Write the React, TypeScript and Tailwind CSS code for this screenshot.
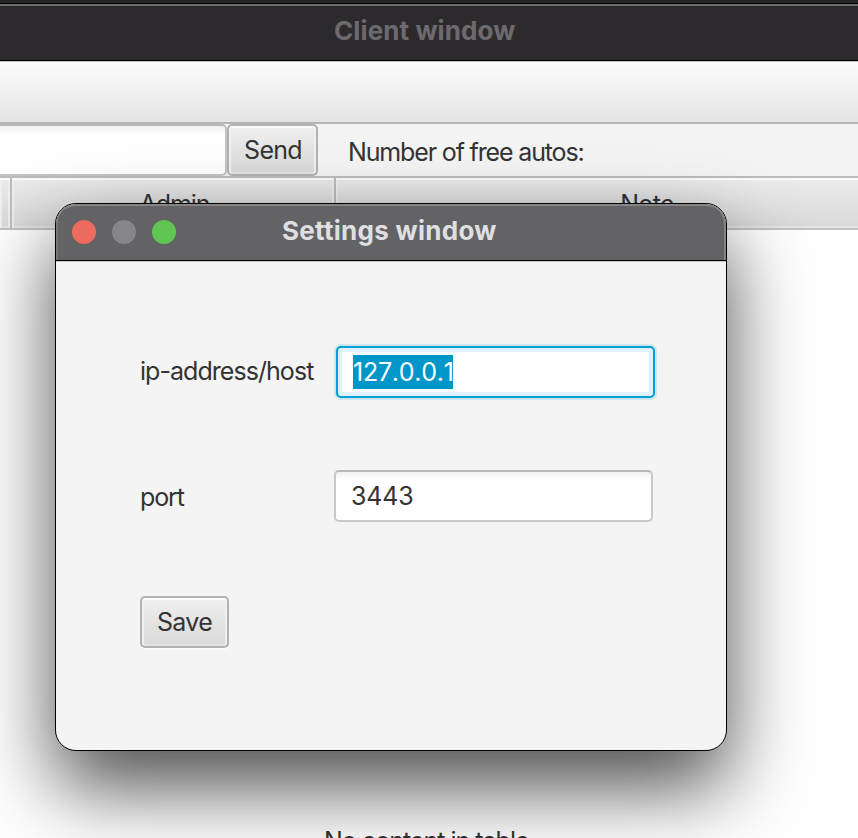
import type { ReactNode } from "react";

const font = "font-['Inter','Liberation_Sans',sans-serif]";

function Button({ children, className = "" }: { children: ReactNode; className?: string }) {
  return (
    <button
      className={`flex h-[52px] shrink-0 items-center justify-center rounded-[5px] border-2 border-[#b2b2b2] bg-linear-to-b from-[#efefef] to-[#d9d9d9] pt-[2px] text-[25px] shadow-[inset_0_2px_0_#fcfcfc,inset_2px_0_0_#f0f0f0,inset_-2px_0_0_#f0f0f0,inset_0_-2px_0_#e3e3e3,0_2px_0_#f9f9f9] ${className}`}
    >
      {children}
    </button>
  );
}

function HeaderCell({ children, className = "" }: { children?: ReactNode; className?: string }) {
  return (
    <div
      className={`flex h-[50px] shrink-0 items-center justify-center bg-linear-to-b from-[#ececec] to-[#d9d9d9] pt-[4px] text-[25px] shadow-[inset_0_2px_0_#fbfbfb,inset_2px_0_0_#f0f0f0,inset_-2px_0_0_#f0f0f0,inset_0_-2px_0_#e5e5e5] ${className}`}
    >
      {children}
    </div>
  );
}

function ClientWindow() {
  return (
    <div className="flex h-full flex-col bg-white">
      <div className="h-1 shrink-0 border-b border-black bg-[#232324]" />
      <div className="flex h-[57px] shrink-0 items-center border-t-2 border-b border-t-[#6a696b] border-b-black bg-[#2d2a2e] pb-[5px] pl-[334px] text-[26px] font-bold text-[#6d6a6e]">
        <span className="tracking-[0.1px]">Client window</span>
      </div>
      <div className="h-[63px] shrink-0 border-t border-b-2 border-t-[#c4c4c4] border-b-[#b5b5b5] bg-linear-to-b from-[#fcfcfc] to-[#e4e4e4]" />
      <div className="flex h-[52px] shrink-0 bg-[#f4f4f4]">
        <div className="h-[52px] w-[227px] shrink-0 rounded-r-[5px] border-2 border-l-0 border-[#c4c4c4] border-t-[#b8b8b8] bg-linear-to-b from-[#f0f0f0] to-white to-[8px]" />
        <Button className="w-[91px] pl-px tracking-[-0.7px]">Send</Button>
        <span className="pt-[9px] pl-[30px] text-[25px] leading-[38px] whitespace-nowrap tracking-[-1.15px]">
          Number of free autos:
        </span>
      </div>
      <div className="flex h-[54px] shrink-0 border-y-2 border-t-[#bdbdbd] border-b-[#c2c2c2]">
        <HeaderCell className="w-[10px]" />
        <HeaderCell className="w-[324px] border-l-2 border-[#bdbdbd] pl-[3px] tracking-[-1.1px]">Admin</HeaderCell>
        <HeaderCell className="w-[624px] border-l-2 border-[#bdbdbd] tracking-[-0.7px]">Note</HeaderCell>
      </div>
      <div className="flex flex-1 items-end overflow-hidden pl-[324px]">
        <div className="h-[12px] text-[25px] leading-[30px] whitespace-nowrap tracking-[-1px]">No content in table</div>
      </div>
    </div>
  );
}

function SettingsWindow() {
  return (
    <div className="absolute top-[203px] left-[55px] flex h-[548px] w-[672px] flex-col overflow-hidden rounded-[21px] border border-black bg-[#f4f4f4] shadow-[0_36px_80px_rgba(0,0,0,0.7)]">
      <div className="flex h-[57px] shrink-0 items-center rounded-t-[20px] border-b border-black bg-[#636365] pl-4 shadow-[inset_0_2px_0_#858587,inset_2px_0_0_#77777a,inset_-2px_0_0_#858587]">
        <div className="flex gap-4">
          <i className="size-6 rounded-full bg-[#ed6a5e]" />
          <i className="size-6 rounded-full bg-[#868688]" />
          <i className="size-6 rounded-full bg-[#61c554]" />
        </div>
        <span className="pb-[3px] pl-[106px] text-[26px] font-bold whitespace-nowrap tracking-[0.28px] text-[#dfdfe1]">Settings window</span>
      </div>
      <div className="grid grid-cols-[194px_auto] border-t border-[#c8c8c8] pt-[84px] pl-[84px] text-[25px]">
        <label className="h-[125px] pt-[5px] leading-[40px] whitespace-nowrap tracking-[-0.95px]">ip-address/host</label>
        <div className="ml-[2px] flex h-[52px] w-[319px] items-center rounded-[5px] border-2 border-[#039ed3] bg-white pl-[15px] shadow-[inset_0_0_0_4px_#ddf1f8,0_0_0_2px_#cde5ec]">
          <span className="h-[34px] w-[100px] bg-[#0096c9] leading-[34px] whitespace-nowrap tracking-[-0.25px] text-white [font-kerning:none]">127.0.0.1</span>
        </div>
        <label className="h-[126px] pt-[6px] leading-[40px] tracking-[-1.1px]">port</label>
        <div className="-mt-px flex h-[52px] w-[319px] items-center rounded-[5px] border-2 border-[#c9c9c9] border-t-[#b8b8b8] bg-linear-to-b from-[#f0f0f0] to-white to-[8px] pt-[2px] pl-[15px] tracking-[-0.2px]">
          3443
        </div>
        <Button className="-mt-px w-[89px] tracking-[-0.7px]">Save</Button>
      </div>
    </div>
  );
}

export default function App() {
  return (
    <main className={`relative h-[838px] w-[858px] overflow-hidden text-[#333] ${font}`}>
      <ClientWindow />
      <SettingsWindow />
    </main>
  );
}
